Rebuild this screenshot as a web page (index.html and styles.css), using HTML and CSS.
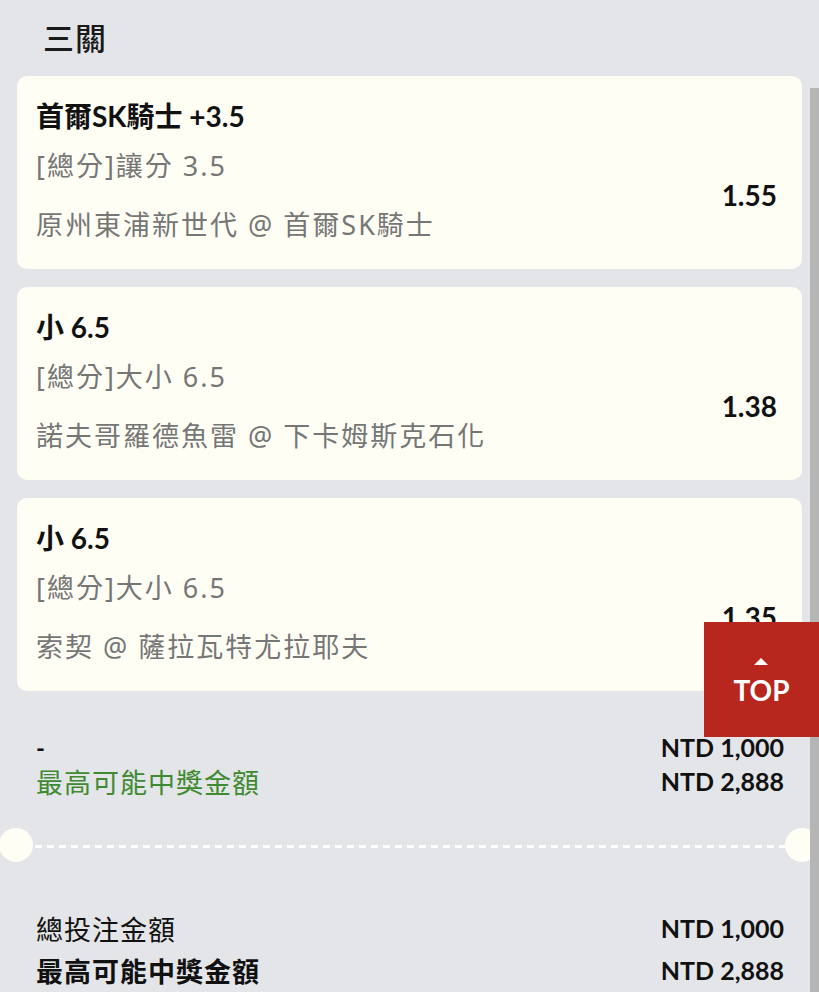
FILE: index.html
```html
<!DOCTYPE html>
<html lang="zh-Hant">
<head>
<meta charset="utf-8">
<title>三關</title>
<link rel="stylesheet" href="styles.css">
</head>
<body>
<div class="page">
  <h1 class="title">三關</h1>

  <div class="cards">
    <div class="card">
      <div class="pick">首爾SK騎士 +3.5</div>
      <div class="card-body">
        <div class="info">
          <div class="line">[總分]讓分 3.5</div>
          <div class="line">原州東浦新世代 @ 首爾SK騎士</div>
        </div>
        <div class="odds">1.55</div>
      </div>
    </div>
    <div class="card">
      <div class="pick">小 6.5</div>
      <div class="card-body">
        <div class="info">
          <div class="line">[總分]大小 6.5</div>
          <div class="line">諾夫哥羅德魚雷 @ 下卡姆斯克石化</div>
        </div>
        <div class="odds">1.38</div>
      </div>
    </div>
    <div class="card">
      <div class="pick">小 6.5</div>
      <div class="card-body">
        <div class="info">
          <div class="line">[總分]大小 6.5</div>
          <div class="line">索契 @ 薩拉瓦特尤拉耶夫</div>
        </div>
        <div class="odds">1.35</div>
      </div>
    </div>
  </div>

  <div class="summary">
    <div class="row"><span class="dash">-</span><span class="amt">NTD 1,000</span></div>
    <div class="row"><span class="green">最高可能中獎金額</span><span class="amt">NTD 2,888</span></div>
  </div>

  <div class="divider">
    <span class="notch notch-left"></span>
    <span class="dashes"></span>
    <span class="notch notch-right"></span>
  </div>

  <div class="totals">
    <div class="trow"><span>總投注金額</span><span class="amt">NTD 1,000</span></div>
    <div class="trow"><span class="strong">最高可能中獎金額</span><span class="amt">NTD 2,888</span></div>
  </div>

  <div class="scrollbar"></div>
  <a class="top-btn" href="#">
    <span class="tri"></span>
    <span class="top-text">TOP</span>
  </a>
</div>
</body>
</html>
```

FILE: styles.css
```css
html { background: #ffffff; }
body {
  margin: 0;
  font-family: "Lato", "Noto Sans CJK TC", sans-serif;
  color: #111;
}
.page {
  position: relative;
  height: 992px;
  overflow: hidden;
  background: #e4e5e8;
  padding-top: 17px;
  box-sizing: border-box;
}
.title {
  margin: 0 0 19px 43px;
  font-family: "Noto Sans CJK TC", sans-serif;
  font-weight: 500;
  font-size: 31px;
  line-height: 40px;
  letter-spacing: 1px;
  color: #1a1a1a;
}
.cards {
  display: flex;
  flex-direction: column;
  gap: 18px;
  padding: 0 17px;
}
.card {
  background: #fffef5;
  border-radius: 10px;
  padding: 20px 25px 15px 19px;
  height: 193px;
  box-sizing: border-box;
}
.pick {
  font-family: "Lato", "Noto Sans CJK TC", sans-serif;
  font-weight: 700;
  font-size: 28px;
  line-height: 40px;
  color: #111;
}
.card-body {
  display: flex;
  align-items: center;
  justify-content: space-between;
}
.line {
  font-family: "Noto Sans", "Noto Sans CJK TC", sans-serif;
  font-size: 27px;
  line-height: 59px;
  letter-spacing: 2px;
  color: #767676;
}
.odds {
  font-weight: 700;
  font-size: 28px;
  color: #111;
}
.summary {
  margin-top: 39px;
  padding: 0 35px 0 36px;
}
.row {
  display: flex;
  justify-content: space-between;
  align-items: center;
  height: 34px;
}
.dash { font-weight: 700; font-size: 24px; }
.green {
  font-family: "Noto Sans CJK TC", sans-serif;
  font-size: 27px;
  color: #3f8a31;
  letter-spacing: 1px;
}
.amt {
  font-family: "Lato", sans-serif;
  font-weight: 700;
  font-size: 25px;
  color: #111;
  letter-spacing: 0;
}
.divider {
  margin-top: 30px;
  height: 34px;
  display: flex;
  align-items: center;
}
.notch {
  flex: 0 0 34px;
  height: 34px;
  border-radius: 50%;
  background: #fffef5;
}
.notch-left { margin-left: -1px; }
.dashes {
  flex: 1;
  height: 3px;
  margin: 3px 0 0 2px;
  background: repeating-linear-gradient(90deg, #ffffff 0 7px, transparent 7px 12px);
}
.totals {
  margin-top: 45px;
  padding: 0 35px 0 36px;
}
.trow {
  display: flex;
  justify-content: space-between;
  align-items: center;
  height: 42px;
  font-family: "Noto Sans CJK TC", sans-serif;
  font-size: 27px;
  color: #111;
  letter-spacing: 1px;
}
.strong { font-weight: 700; }
.scrollbar {
  position: absolute;
  right: 0;
  top: 88px;
  bottom: 0;
  width: 9px;
  background: #b5b5b5;
}
.top-btn {
  position: absolute;
  left: 704px;
  top: 622px;
  width: 115px;
  height: 115px;
  box-sizing: border-box;
  padding-top: 3px;
  background: #b8271e;
  display: flex;
  flex-direction: column;
  align-items: center;
  justify-content: center;
  gap: 11px;
  text-decoration: none;
}
.tri {
  width: 0;
  height: 0;
  border-left: 7px solid transparent;
  border-right: 7px solid transparent;
  border-bottom: 7px solid #ffffff;
  margin-left: -2px;
}
.top-text {
  font-family: "Lato", sans-serif;
  font-weight: 700;
  font-size: 28px;
  line-height: 28px;
  color: #ffffff;
}
```
